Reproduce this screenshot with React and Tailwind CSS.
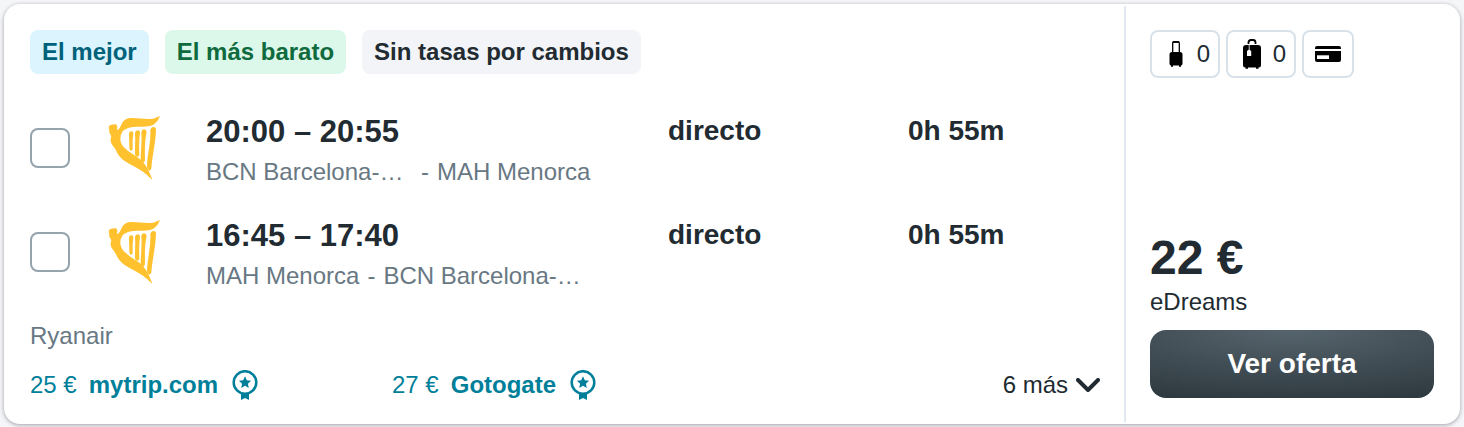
import { useState } from "react";

const legs = [
  { id: "ida", time: "20:00 – 20:55", from: "BCN Barcelona-…", to: "MAH Menorca", fromWidth: "w-[207px]", duration: "0h 55m" },
  { id: "vuelta", time: "16:45 – 17:40", from: "MAH Menorca", to: "BCN Barcelona-…", fromWidth: "w-auto", duration: "0h 55m" },
];

const deals = [
  { price: "25 €", name: "mytrip.com" },
  { price: "27 €", name: "Gotogate" },
];

function HarpLogo() {
  return (
    <svg viewBox="54 30 156 198" className="h-[66px] w-[52px]" fill="#ffc22e" role="img" aria-label="Ryanair">
      <path d="M56 64 Q62 57 77 58 Q83 60 82 68 Q80 72 83 76 Q89 72 93 61 Q100 41 119 39 C142 38 171 44 189 41 Q199 38 210 33 Q203 52 189 60 C172 68 148 64 130 66 Q108 68 98 79 Q90 90 91 104 Q93 119 105 130 C118 143 140 154 154 166 C168 179 180 204 187 225 Q172 210 157 199 C142 188 118 178 104 168 C90 158 84 149 77 134 C70 122 60 115 62 102 Q66 93 60 87 Q57 83 58 77 Z" />
      <path d="M117 87 Q117 78 124 79 Q131 80 130 88 Q126 109 128 132 Q127 138 122 137 Q118 136 118 130 Z" />
      <path d="M135 84 Q136 76 143 76 Q151 76 150 86 C146 111 148 134 148 149 Q146 156 141 155 Q135 153 135 146 C134 125 137 105 135 84 Z" />
      <path d="M154 82 Q155 73 163 73 Q170 74 170 82 C163 112 165 143 165 166 Q163 174 156 171 Q151 168 152 159 C153 132 156 107 154 82 Z" />
      <path d="M181 76 Q182 67 190 66 Q199 66 198 75 C197 111 187 153 184 190 Q182 199 176 196 Q170 192 171 181 C173 146 183 111 181 76 Z" />
    </svg>
  );
}

function BadgeIcon() {
  return (
    <svg viewBox="0 0 26 30" className="h-[30px] w-[26px]" aria-hidden="true">
      <circle cx="13" cy="12.5" r="11.3" fill="none" stroke="currentColor" strokeWidth="2.5" />
      <path fill="currentColor" d="M13 6.3l1.8 4 4.3.5-3.2 2.9.9 4.3-3.8-2.2L9.2 18l.9-4.3-3.2-2.9 4.3-.5zM9 23h8v7l-4-2-4 2z" />
    </svg>
  );
}

function CabinBagIcon() {
  return (
    <svg viewBox="0 0 14 28" className="h-7 w-[14px]" aria-hidden="true">
      <path d="M3.700 12V3Q3.700 1.700 5 1.700h4q1.300 0 1.300 1.300V12" fill="none" stroke="#000" strokeWidth="1.300" />
      <path d="M4 2h6" stroke="#000" strokeWidth="1.800" />
      <path d="M3 12h8q2.500 0 2.500 2.500v9q0 2-1.500 2v1.300h-2v-1.300H4v1.300H2v-1.300q-1.500 0-1.500-2v-9Q.5 12 3 12z" />
    </svg>
  );
}

function SuitcaseIcon() {
  return (
    <svg viewBox="0 0 18 30" className="h-[30px] w-[18px]" aria-hidden="true">
      <path d="M5.500 5V3.500Q5.500 1 8 1h2q2.500 0 2.500 2.500V5" fill="none" stroke="#000" strokeWidth="1.800" />
      <path d="M3 6h12q3 0 3 3v17q0 2.500-2.500 2.500v1.300H13v-1.300H5v1.300H2.500v-1.300Q0 28.500 0 26V9q0-3 3-3z" />
      <path d="M6.200 6v5" stroke="#fff" strokeWidth=".8" />
      <path d="M4 12l2-1.500L8.200 12v5H4z" fill="#fff" />
    </svg>
  );
}

function CardIcon() {
  return (
    <svg viewBox="0 0 26 16" className="h-4 w-[26px]" aria-hidden="true">
      <path d="M2 0h22q2 0 2 2v1H0V2q0-2 2-2zM0 5h26v9q0 2-2 2H2q-2 0-2-2z" />
      <path d="M2 9.300h12v3.700H2z" fill="#fff" />
    </svg>
  );
}

function Leg({ leg }) {
  const [checked, setChecked] = useState(false);

  return (
    <div className="flex items-start text-[#212b31]">
      <input
        type="checkbox"
        checked={checked}
        onChange={(e) => setChecked(e.target.checked)}
        aria-label={`Seleccionar ${leg.time}`}
        className="mt-4 size-10 shrink-0 appearance-none rounded-lg border-2 border-[#95a3ad] bg-white checked:bg-[#007f9a]"
      />
      <div className="ml-[38px] mt-[3px] w-[98px] shrink-0">
        <HarpLogo />
      </div>
      <div className="min-w-0 flex-1 whitespace-nowrap">
        <div className="text-[31px] leading-10 font-bold">{leg.time}</div>
        <div className="flex gap-2 text-2xl leading-10 text-[#687883]">
          <span className={leg.fromWidth}>{leg.from}</span>
          <span>-</span>
          <span>{leg.to}</span>
        </div>
      </div>
      <div className="w-60 shrink-0 text-[28px] leading-[38px] font-bold">directo</div>
      <div className="w-48 shrink-0 text-[28px] leading-[38px] font-bold">{leg.duration}</div>
    </div>
  );
}

export default function App() {
  return (
    <div className="bg-[#f5f6f8] px-1 pt-1 pb-[3px] font-['Liberation_Sans',Arial,sans-serif]">
      <article className="flex rounded-2xl bg-white shadow-[0_1px_4px_rgba(30,30,50,0.4)]">
        <section className="min-w-0 flex-1 pt-[26px] pr-6 pb-[22px] pl-[26px]">
          <div className="flex gap-4 text-2xl leading-[44px] font-bold whitespace-nowrap">
            <span className="rounded-lg bg-[#dbf4fd] px-3 text-[#00627a]">El mejor</span>
            <span className="rounded-lg bg-[#dcf8ea] px-3 text-[#0f6b3e]">El más barato</span>
            <span className="rounded-lg bg-[#f3f4f7] px-3 text-[#212b31]">Sin tasas por cambios</span>
          </div>

          <div className="mt-[38px] flex flex-col gap-6">
            {legs.map((leg) => (
              <Leg key={leg.id} leg={leg} />
            ))}
          </div>

          <p className="mt-6 text-2xl leading-8 text-[#687883]">Ryanair</p>

          <div className="mt-4 flex items-center text-2xl leading-[34px]">
            {deals.map((deal) => (
              <div key={deal.name} className="w-[362px] text-[#007f9a]">
                <a href="#" className="flex w-fit items-center whitespace-nowrap">
                  <span>{deal.price}</span>
                  <b className="ml-3 mr-[14px]">{deal.name}</b>
                  <BadgeIcon />
                </a>
              </div>
            ))}
            <button type="button" className="ml-auto flex items-center gap-2 whitespace-nowrap text-[#212b31]">
              6 más
              <svg viewBox="0 0 24 14" className="h-[14px] w-6" fill="none" stroke="currentColor" strokeWidth="4" strokeLinecap="round" strokeLinejoin="round" aria-hidden="true">
                <path d="M2 2l10 10L22 2" />
              </svg>
            </button>
          </div>
        </section>

        <aside className="my-0.5 flex w-[336px] shrink-0 flex-col border-l-2 border-[#e2e8ef] pt-6 pr-[26px] pb-6 pl-6 text-[#212b31]">
          <div className="flex gap-1.5 text-2xl">
            <div className="flex h-12 w-[70px] items-center justify-end gap-3.5 rounded-lg border-2 border-[#d9e2e9] pr-2">
              <CabinBagIcon />
              <span>0</span>
            </div>
            <div className="flex h-12 w-[70px] items-center justify-end gap-3 rounded-lg border-2 border-[#d9e2e9] pr-2">
              <SuitcaseIcon />
              <span>0</span>
            </div>
            <div className="flex h-12 w-[52px] items-center justify-center rounded-lg border-2 border-[#d9e2e9]">
              <CardIcon />
            </div>
          </div>

          <div className="mt-auto text-5xl leading-[56px] font-bold">22 €</div>
          <div className="text-2xl leading-8">eDreams</div>
          <button
            type="button"
            className="mt-3 h-[68px] w-full rounded-2xl bg-[radial-gradient(120%_120%_at_50%_0%,#56646d_0%,#2a343a_100%)] text-[28px] font-bold text-white"
          >
            Ver oferta
          </button>
        </aside>
      </article>
    </div>
  );
}
